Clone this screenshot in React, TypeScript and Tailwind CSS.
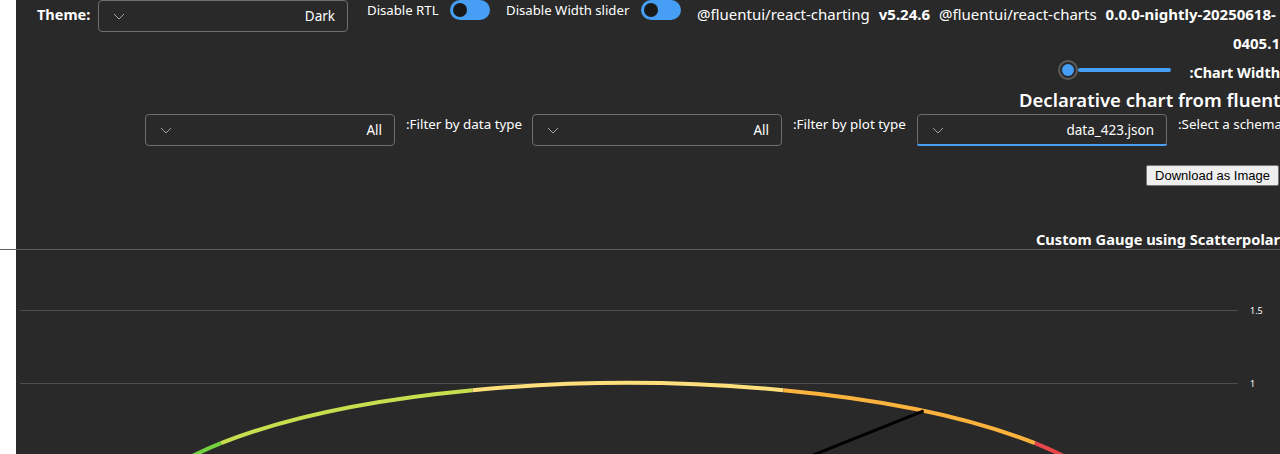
import React from "react";

function Chevron() {
  return (
    <svg width="12" height="7" viewBox="0 0 12 7" className="shrink-0">
      <path d="M1 1l5 5 5-5" fill="none" stroke="#a3a3a3" strokeWidth="1" />
    </svg>
  );
}

function Dropdown({ value, active }: { value: string; active?: boolean }) {
  return (
    <div className="relative flex h-8 w-[250px] shrink-0 items-center justify-between rounded-[4px] border border-[#6e6e6e] bg-[#292929] pl-[14px] pr-[12px]">
      <Chevron />
      <span className="text-[13.5px] leading-5 text-white">{value}</span>
      {active ? (
        <div className="absolute bottom-[-1px] left-[-1px] right-[-1px] h-[2px] rounded-b-[4px] bg-[#479ef5]" />
      ) : null}
    </div>
  );
}

function Toggle() {
  return (
    <div className="flex h-5 w-10 shrink-0 items-center rounded-full bg-[#479ef5] px-[3px]">
      <div className="h-[14px] w-[14px] rounded-full bg-[#1a1a1a]" />
    </div>
  );
}

function Gauge() {
  const cx = 612;
  const cy = 279;
  const rx = 503;
  const ry = 146;
  const pt = (deg: number) => {
    const r = (deg * Math.PI) / 180;
    return [cx + rx * Math.cos(r), cy - ry * Math.sin(r)];
  };
  const segs = [
    { a: 180, b: 144, c: "#74d140" },
    { a: 144, b: 108, c: "#c6df4f" },
    { a: 108, b: 72, c: "#ffdf7b" },
    { a: 72, b: 36, c: "#fbb33e" },
    { a: 36, b: 0, c: "#e8464a" },
  ];
  const tip = pt(54);
  return (
    <svg width="1264" height="230" viewBox="0 0 1264 230" className="block shrink-0">
      <line x1="4" y1="60.5" x2="1222" y2="60.5" stroke="#4e4e4e" strokeWidth="1" />
      <line x1="4" y1="133.5" x2="1222" y2="133.5" stroke="#4e4e4e" strokeWidth="1" />
      <text x="1234" y="64" fill="#ffffff" fontSize="9" fontFamily="'Noto Sans', sans-serif">
        1.5
      </text>
      <text x="1234" y="137" fill="#ffffff" fontSize="9" fontFamily="'Noto Sans', sans-serif">
        1
      </text>
      {segs.map((s, i) => {
        const [x1, y1] = pt(s.a);
        const [x2, y2] = pt(s.b);
        return (
          <path
            key={i}
            d={`M ${x1} ${y1} A ${rx} ${ry} 0 0 1 ${x2} ${y2}`}
            fill="none"
            stroke={s.c}
            strokeWidth="4"
          />
        );
      })}
      <line x1={cx} y1={cy} x2={tip[0]} y2={tip[1]} stroke="#000000" strokeWidth="3" />
    </svg>
  );
}

export default function App() {
  return (
    <div className="flex h-[454px] w-full overflow-hidden bg-white font-['Noto_Sans',sans-serif] text-white">
      <div className="w-4 shrink-0 bg-white" />
      <div className="flex min-w-0 flex-1 flex-col bg-[#292929]">
        {/* top block */}
        <div className="flex shrink-0 items-start pl-[21px]">
          <div className="w-[61px] shrink-0 pt-[4px] text-[14.5px] font-bold leading-5">Theme:</div>
          <Dropdown value="Dark" />
          <div className="ml-[19px] w-[71px] shrink-0 whitespace-nowrap text-[13.2px] leading-5">Disable RTL</div>
          <div className="ml-[12px]">
            <Toggle />
          </div>
          <div className="ml-[16px] w-[123px] shrink-0 whitespace-nowrap text-[13.2px] leading-5">Disable Width slider</div>
          <div className="ml-[12px]">
            <Toggle />
          </div>
          <div className="ml-[16px] flex min-w-0 flex-1 flex-col">
            <div className="flex gap-[9px] whitespace-nowrap text-[15px] leading-[28px]">
              <span>@fluentui/react-charting</span>
              <span className="font-bold">v5.24.6</span>
              <span>@fluentui/react-charts</span>
              <span className="font-bold">0.0.0-nightly-20250618-</span>
            </div>
            <div className="text-right text-[15px] font-bold leading-[30px]">0405.1</div>
            <div className="flex h-6 items-start justify-end">
              <div className="mt-[2px] flex items-center">
                <div className="flex h-5 w-5 items-center justify-center rounded-full border-2 border-[#5c5c5c] bg-[#292929]">
                  <div className="h-3 w-3 rounded-full bg-[#479ef5]" />
                </div>
                <div className="h-1 w-[93px] rounded-full bg-[#479ef5]" />
              </div>
              <div className="ml-[18px] mt-[5px] whitespace-nowrap text-[14.4px] font-bold leading-5">:Chart Width</div>
            </div>
            <div className="ml-[322px] mt-[6px] whitespace-nowrap text-[18.5px] font-semibold leading-6">
              Declarative chart from fluentui
            </div>
          </div>
        </div>

        {/* filters */}
        <div className="mt-[2px] flex shrink-0 items-start pl-[129px]">
          <Dropdown value="All" />
          <div className="ml-[11px] w-[115px] shrink-0 whitespace-nowrap text-[13.4px] leading-5">:Filter by data type</div>
          <div className="ml-[11px]">
            <Dropdown value="All" />
          </div>
          <div className="ml-[11px] w-[113px] shrink-0 whitespace-nowrap text-[13.4px] leading-5">:Filter by plot type</div>
          <div className="ml-[11px]">
            <Dropdown value="data_423.json" active />
          </div>
          <div className="ml-[11px] shrink-0 whitespace-nowrap text-[13.4px] leading-5">:Select a schema</div>
        </div>

        {/* download */}
        <div className="mt-[19px] flex shrink-0 justify-end pr-px">
          <button className="h-[21px] rounded-[2px] border border-[#767676] bg-[#efefef] px-[8px] font-['Liberation_Sans',sans-serif] text-[13px] leading-[19px] text-black">
            Download as Image
          </button>
        </div>

        {/* chart title */}
        <div className="mt-[43px] shrink-0 whitespace-nowrap text-right text-[14.6px] font-bold leading-5">
          Custom Gauge using Scatterpolar
        </div>
        <div className="-ml-4 h-px w-[calc(100%+16px)] shrink-0 bg-[#5e5e5e]" />
        <Gauge />
      </div>
    </div>
  );
}
